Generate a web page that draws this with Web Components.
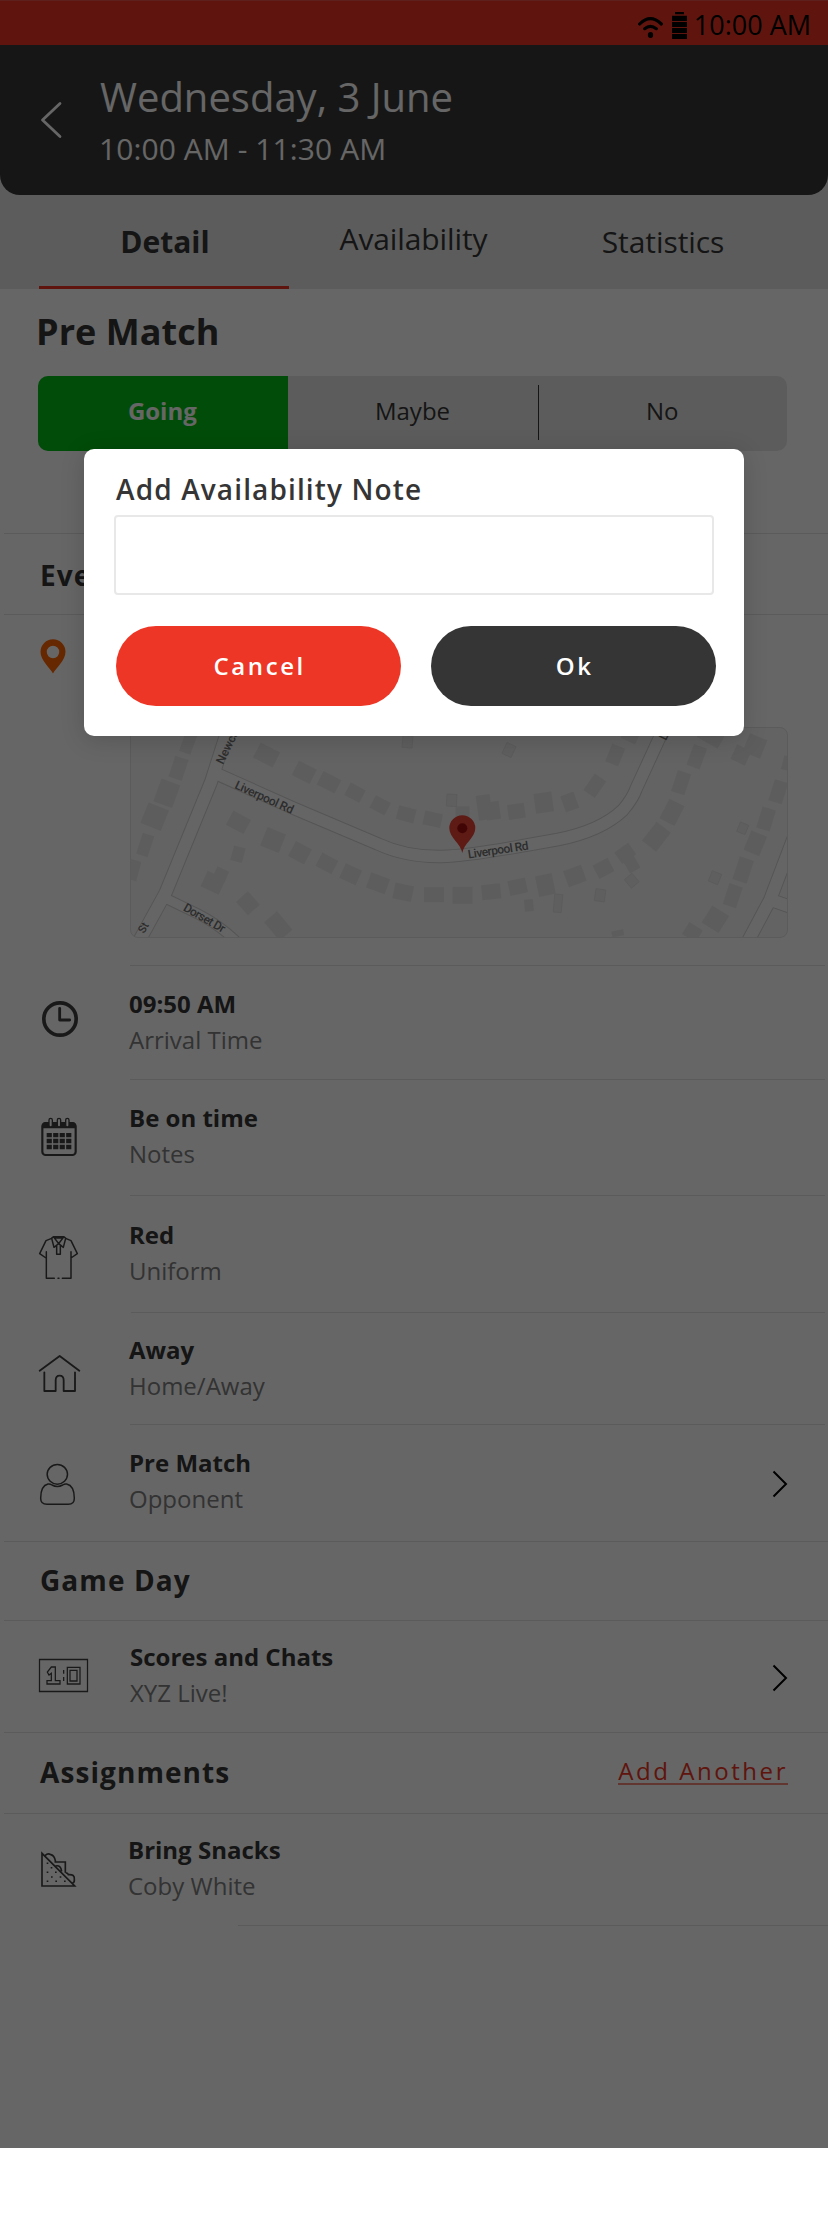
<!DOCTYPE html>
<html lang="en">
<head>
<meta charset="utf-8">
<title>Match detail</title>
<style>
  html, body { margin: 0; background: #fff; }
  body { font-family: "Open Sans", sans-serif; color: #353535; }
</style>
</head>
<body>
<match-screen></match-screen>

<script>
const define = (name, html, setup) => customElements.define(name, class extends HTMLElement {
  connectedCallback() {
    if (this.shadowRoot) return;
    const root = this.attachShadow({ mode: 'open' });
    const tpl = document.createElement('template');
    tpl.innerHTML = html;
    root.append(tpl.content.cloneNode(true));
    if (setup) setup(root, this);
  }
});

define('status-bar', `
<style>
  :host { display: flex; height: 45px; box-sizing: border-box; justify-content: flex-end; align-items: flex-start;
    padding: 6px 17px 0 0; background: #ed3625; color: #000; box-shadow: inset 0 1px #e8504a; }
  svg { margin: 6px 7px 0 0; }
  span { font-size: 27px; line-height: 37px; white-space: nowrap; }
</style>
<svg width="49" height="27" viewBox="54 36 147 81">
  <g fill="none" stroke="#000" stroke-width="9.500" stroke-linecap="round">
    <path d="M59 72Q91 40 124 72"/><path d="M74 86Q91 72 109 86"/>
  </g>
  <ellipse cx="91.500" cy="105" rx="8" ry="9"/>
  <path d="M165 36h27v6.500h-27zM156 47.500h45V63h-45zM156 66h45v15h-45zM156 84h45v15h-45zM156 102h45v15h-45z"/>
</svg>
<span>10:00 AM</span>`);

define('event-header', `
<style>
  :host { display: block; background: #e6e6e6; }
  header { display: flex; height: 150px; box-sizing: border-box; background: #373737; color: #fff; border-radius: 0 0 20px 20px; }
  svg { margin: 56px 38px 0 40px; flex: none; }
  .t { padding-top: 25px; white-space: nowrap; }
  .a { font-size: 40px; line-height: 54px; }
  .b { font-size: 30px; line-height: 40px; margin: 5px 0 0 -1px; letter-spacing: .08px; }
</style>
<header>
  <svg width="22" height="38" viewBox="0 0 22 38" fill="none" stroke="#fff" stroke-width="2.800" stroke-linecap="round" stroke-linejoin="round"><path d="M20 2.500L2.500 19 20 35.500"/></svg>
  <div class="t"><div class="a"><slot name="date"></slot></div><div class="b"><slot name="time"></slot></div></div>
</header>`);

define('tab-bar', `
<style>
  :host { display: grid; grid-template-columns: 250px 248px 250px; padding-left: 39px; height: 94px; box-sizing: border-box; background: #e6e6e6; }
  ::slotted(*) { text-align: center; font-size: 30px; line-height: 40px; padding: 27px 0 0 1px; box-sizing: border-box; }
  ::slotted(.on) { font-weight: 700; border-bottom: 3px solid #ed3625; padding-left: 2px; }
  ::slotted(.raised) { padding-top: 24px; letter-spacing: -.12px; }
  ::slotted(.last) { letter-spacing: -.08px; padding-left: 2px; }
</style><slot></slot>`);

define('answer-switch', `
<style>
  :host { display: grid; grid-template-columns: repeat(3, 1fr); width: 749px; height: 75px; border-radius: 10px; overflow: hidden; background: #e6e6e6; }
  div { display: flex; align-items: center; justify-content: center; font-size: 24px; box-sizing: border-box; padding-bottom: 6px; }
  .yes { background: #00be14; color: #fff; font-weight: 700; padding-right: 1px; }
  .no { position: relative; }
  .no::before { content: ""; position: absolute; left: 1px; top: 9px; width: 1px; height: 55px; background: #353535; }
</style>
<div class="yes">Going</div><div>Maybe</div><div class="no">No</div>`);

define('section-head', `
<style>
  :host { display: flex; justify-content: space-between; align-items: flex-start; box-sizing: border-box;
    height: var(--h); padding: var(--pad) 40px 0 40px; position: relative; }
  :host::after { content: ""; position: absolute; left: 4px; right: 0; bottom: 0; height: 1px; background: #e3e3e3; }
  h2 { margin: 0; font-size: 28px; line-height: 38px; font-weight: 700; letter-spacing: 1.080px; white-space: nowrap; }
</style>
<h2><slot></slot></h2><slot name="action"></slot>`);

define('text-link', `
<style>
  :host { display: block; margin-top: 5px; color: #ed3625; font-size: 24px; line-height: 25px; font-weight: 500;
    letter-spacing: 2.550px; white-space: nowrap; border-bottom: 2px solid #f3877c; }
</style><slot></slot>`);

define('info-row', `
<style>
  :host { display: grid; grid-template-columns: var(--x, 129px) 1fr auto; box-sizing: border-box; height: var(--h); position: relative; align-items: start; overflow: hidden; }
  :host::after { content: ""; position: absolute; left: var(--line, 130px); right: var(--end, 3px); bottom: 0; height: 1px; background: #e3e3e3; }
  .text { padding-top: var(--pad); font-size: 24px; line-height: 36px; white-space: nowrap; }
  .title { font-weight: 700; }
  .sub { color: #808080; }
  .go { display: none; margin: var(--go, 45px) 40px 0 0; }
  :host([link]) .go { display: block; }
</style>
<slot name="icon"></slot>
<div class="text"><div class="title"><slot name="title"></slot></div><div class="sub"><slot name="sub"></slot></div></div>
<svg class="go" width="16" height="28" viewBox="0 0 16 28" fill="none" stroke="#000" stroke-width="2"><path d="M1.500 1.500L14 14 1.500 26.500"/></svg>`);

/* Each house: x, y on the sheet, width, height, angle. */
const houses = [
  [338,105,22,17,27],[425,157,20,16,27],[482,187,20,15,27],[542,218,17,14,28],[600,256,17,14,28],[660,283,18,14,15],[721,298,18,14,12],
  [840,262,14,25,-8],[860,272,14,18,-8],[914,274,17,15,-8],[977,248,18,20,-8],[1037,246,14,17,-20],[1095,197,14,20,35],[1142,105,14,19,22],[1178,44,16,14,25],[790,280,14,14,0],
  [273,307,20,16,28],[353,360,20,20,22],[415,398,18,17,28],[477,430,18,15,28],[532,463,18,16,25],[595,490,20,16,20],[653,517,19,16,12],
  [724,524,20,15,0],[790,526,20,17,0],[856,515,19,15,-6],[917,500,18,15,-12],[981,495,17,21,-12],[1049,468,19,17,-20],[1115,445,17,15,-28],
  [1165,400,17,14,-35],[1178,428,12,18,-30],[1237,350,18,24,38],[1273,277,17,22,27],[1294,188,14,22,18],[1330,110,14,22,20],[1362,50,24,14,30],
  [157,70,12,20,20],[135,145,14,22,18],[108,220,20,24,20],[80,290,22,22,22],[58,375,12,22,18],[30,450,12,20,15],
  [272,403,12,15,15],[215,488,20,17,25],[232,465,13,13,25],[295,550,16,18,-42],[365,618,17,24,-40],
  [943,556,9,12,-5],[1432,105,16,16,25],[1464,78,19,20,22],[1538,130,9,14,15],[1518,215,14,22,17],[1490,297,14,22,17],[1465,370,17,21,22],
  [1437,450,15,24,18],[1413,527,14,22,18],[1373,598,20,20,32],[1320,637,16,14,32],[1148,640,12,6,-10]
];
const sheds = [[663,65,10,12,5],[765,241,10,12,3],[897,90,10,12,25],[1010,550,8,18,5],[1107,526,10,12,8],[1180,482,11,10,50],[1372,473,10,11,22],[1436,325,9,10,22]];

define('street-map', `
<style>
  :host { display: block; width: 658px; height: 211px; box-sizing: border-box; border: 1px solid #e3e3e3; border-radius: 8px; overflow: hidden; background: #f7f7f7; }
  svg { display: block; }
  text { font: 500 12px Roboto, sans-serif; fill: #707070; }
</style>
<svg width="656" height="209" viewBox="1 1 656 209">
  <g id="b"></g>
  <g fill="none" stroke-linejoin="round">
    <g stroke="#d4d4d4">
      <path stroke-width="13.500" d="M89 48L163 81 248 117Q276 130 311 129.500 337 129 397 118L428 112.500Q471 104 493 83 503 71 506 62L541-14"/>
      <path stroke-width="14" d="M105-20L81 55 35.500 166 8 216"/>
      <path stroke-width="11" d="M35 171L68 187Q88 197 106 214"/>
      <path stroke-width="14" d="M616 218L640 173 664 110M641 173L664 181"/>
    </g>
    <g stroke="#fdfdfd">
      <path stroke-width="11.500" d="M85 46L163 81 248 117Q276 130 311 129.500 337 129 397 118L428 112.500Q471 104 493 83 503 71 506 62L541-14"/>
      <path stroke-width="12" d="M105-20L81 55 35.500 166 8 216"/>
      <path stroke-width="9" d="M31 169L68 187Q88 197 106 214"/>
      <path stroke-width="12" d="M616 218L640 173 664 110M641 173L664 181"/>
    </g>
  </g>
  <text transform="translate(104 61) rotate(24.500)" textLength="63">Liverpool Rd</text>
  <text transform="translate(338.500 131.500) rotate(-8.500)" textLength="61">Liverpool Rd</text>
  <text transform="translate(52.500 183) rotate(30)" textLength="46">Dorset Dr</text>
  <text transform="translate(93 38) rotate(-64)">Newca</text>
  <text transform="translate(14 207) rotate(-60)" style="font-size:11px">St</text>
  <text transform="translate(536 14) rotate(-65)">L</text>
  <path fill="#ea4335" d="M332.300 126C331 117 319.300 110.500 319.300 101.300a13 13 0 0 1 26 0C345.300 110.500 333.600 117 332.300 126z"/>
  <circle cx="332.300" cy="101.300" r="5" fill="#a50e0e"/>
</svg>`, root => {
  const box = (list, style) => list.map(([x, y, w, h, a]) =>
    `<rect x="${-w / 2}" y="${-h / 2}" width="${w}" height="${h}" transform="translate(${(x / 2.306 - 10).toFixed(1)} ${(y / 3 - 7).toFixed(1)}) rotate(${a})" ${style}/>`).join('');
  root.getElementById('b').innerHTML = box(houses, 'fill="#e9e9e9"') + box(sheds, 'fill="#eeeef0" stroke="#e2e2e6" stroke-width=".8"');
});

define('place-row', `
<style>
  :host { display: grid; grid-template-columns: 130px 1fr; height: 351px; box-sizing: border-box; align-items: start; position: relative; }
  :host::after { content: ""; position: absolute; left: 130px; right: 3px; bottom: 0; height: 1px; background: #e3e3e3; }
  .pin { margin: 24px 0 0 40px; }
  street-map { margin-top: 112px; }
</style>
<svg class="pin" width="26" height="35" viewBox="0 0 26 35"><path fill="#ff6400" fill-rule="evenodd" d="M13 34.500C10 29 .5 21.500.5 12.800a12.500 12.500 0 0 1 25 0C25.500 21.500 16 29 13 34.500zM13 6.800a6.200 6.200 0 1 0 0 12.400 6.200 6.200 0 0 0 0-12.400z"/></svg>
<street-map></street-map>`);

define('pill-button', `
<style>
  :host { display: flex; align-items: center; justify-content: center; width: 285px; height: 80px; box-sizing: border-box; padding-left: 2.400px; padding-bottom: 1px;
    border-radius: 40px; background: var(--fill); color: #fff; font-size: 24px; font-weight: 600; letter-spacing: 2.600px; }
</style><slot></slot>`);

define('note-dialog', `
<style>
  :host { display: block; width: 660px; height: 287px; box-sizing: border-box; padding: 21px 28px 0 30px; background: #fff; border-radius: 10px; box-shadow: 0 4px 24px rgba(0,0,0,.16); }
  .t { font-size: 28px; line-height: 38px; font-weight: 600; letter-spacing: 1.120px; padding-left: 2px; }
  .field { margin-top: 7px; width: 600px; height: 80px; box-sizing: border-box; border: 2px solid #e8e8e8; border-radius: 4px; }
  .row { display: flex; gap: 30px; margin: 31px 0 0 2px; }
</style>
<div class="t"><slot></slot></div>
<div class="field"></div>
<div class="row"><pill-button style="--fill:#ed3625">Cancel</pill-button><pill-button style="--fill:#353535">Ok</pill-button></div>`);

define('match-screen', `
<style>
  :host { display: block; position: relative; width: 828px; height: 2148px; background: #fff; overflow: hidden; }
  .top { height: 245px; box-sizing: border-box; padding: 19px 0 0 38px; position: relative; }
  .top::after { content: ""; position: absolute; left: 4px; right: 0; bottom: 0; height: 1px; background: #e3e3e3; }
  h1 { margin: 0 0 20px -2px; font-size: 36px; line-height: 48px; font-weight: 700; letter-spacing: .05px; }
  .shade { position: absolute; inset: 0; background: rgba(0,0,0,.6); }
  note-dialog { position: absolute; left: 84px; top: 449px; }
  .i { display: block; fill: none; stroke: #404040; }
</style>
<status-bar></status-bar>
<event-header><span slot="date">Wednesday, 3 June</span><span slot="time">10:00 AM - 11:30 AM</span></event-header>
<tab-bar><div class="on">Detail</div><div class="raised">Availability</div><div class="last">Statistics</div></tab-bar>
<div class="top"><h1>Pre Match</h1><answer-switch></answer-switch></div>
<section-head style="--h:81px;--pad:22px">Event</section-head>
<place-row></place-row>

<info-row style="--h:114px;--pad:20px">
  <svg slot="icon" class="i" width="129" height="113" viewBox="0 18 387 339"><circle cx="180" cy="177" r="48.500" stroke-width="11"/><path d="M179 145v35h30" stroke-width="8.500" stroke-linecap="round" stroke-linejoin="round"/></svg>
  <span slot="title">09:50 AM</span><span slot="sub">Arrival Time</span>
</info-row>

<info-row style="--h:116px;--pad:20px">
  <svg slot="icon" class="i" width="129" height="115" viewBox="0 360 387 345">
    <rect x="127" y="489" width="100" height="96" rx="10" stroke-width="6.500"/>
    <path d="M127 505V496q0-9 9-9h82q9 0 9 9v9z" fill="#404040" stroke="none"/>
    <g fill="#fff" stroke-width="4"><rect x="147" y="475" width="10" height="26" rx="5"/><rect x="172" y="475" width="10" height="26" rx="5"/><rect x="197" y="475" width="10" height="26" rx="5"/></g>
    <path d="M140 525.500h74M140 543h74M140 561h74" stroke-width="13" stroke-dasharray="15.500 4"/>
  </svg>
  <span slot="title">Be on time</span><span slot="sub">Notes</span>
</info-row>

<info-row style="--h:117px;--pad:21px;--line:131px">
  <svg slot="icon" class="i" width="129" height="116" viewBox="0 -12 387 348" stroke-width="4.500" stroke-linejoin="round" stroke-linecap="round">
    <path d="M155 115l-17 7-19 39 19 13M197 115l16 7 19 39-19 13M139 155v80h24M213 155v80h-26M174 235h3"/>
    <path d="M155 115l7 27 14-11 14 11 7-27-5-5h-32zM161 111l15 20 15-20M166 114h20M170 136v27h11v-27"/>
  </svg>
  <span slot="title">Red</span><span slot="sub">Uniform</span>
</info-row>

<info-row style="--h:112px;--pad:19px;--line:130px">
  <svg slot="icon" class="i" width="129" height="111" viewBox="0 339 387 333" stroke-width="5.500" stroke-linejoin="round" stroke-linecap="round">
    <path d="M119 512l60-44 59 44M133 517v56h34v-32q0-14 12-14t12 14v32h34v-56"/>
  </svg>
  <span slot="title">Away</span><span slot="sub">Home/Away</span>
</info-row>

<info-row link style="--h:117px;--pad:20px;--line:4px;--end:0px;--go:45px">
  <svg slot="icon" class="i" width="129" height="116" viewBox="0 675 387 348" stroke-width="4.500">
    <ellipse cx="172" cy="823" rx="30.500" ry="29.500"/>
    <path d="M144 852q6-1 12 3 16 9 32 0 6-4 12-3 23 5 23 43 0 18-18 18h-64q-19 0-19-18 0-38 22-43z"/>
  </svg>
  <span slot="title">Pre Match</span><span slot="sub">Opponent</span>
</info-row>

<section-head style="--h:79px;--pad:19px">Game Day</section-head>

<info-row link style="--h:112px;--pad:18px;--line:4px;--end:0px;--x:130px;--go:43px">
  <svg slot="icon" class="i" width="130" height="111" viewBox="-60 -57 390 333" stroke-width="3.800">
    <path d="M58.500 58.500h144v96h-144z"/>
    <path d="M94 81h12v41h14v10H81v-10h13V100l-7 5-5-9zM142 82h38v50h-38zM150 91h21v32h-21zM131 90v11M131 111v12"/>
  </svg>
  <span slot="title">Scores and Chats</span><span slot="sub">XYZ Live!</span>
</info-row>

<section-head style="--h:81px;--pad:20px">Assignments<text-link slot="action">Add Another</text-link></section-head>

<info-row style="--h:112px;--pad:18px;--line:238px;--end:0px;--x:128px">
  <svg slot="icon" class="i" width="128" height="111" viewBox="-60 -48 384 333" stroke-width="5">
    <path d="M66 70v98h98zM76 76q7-7 17-2 10 3 13 18v6M104 96h32v32M107 108q15-4 18 16M137 130q5-3 8 4 20-2 18 14 1 9-5 11"/>
    <path stroke-width="4.500" d="M80 100h5M80 127h5M92 113h5M93 141h5M80 154h5M105 127h5M106 154h5M119 141h5M132 154h5"/>
  </svg>
  <span slot="title">Bring Snacks</span><span slot="sub">Coby White</span>
</info-row>

<div class="shade"></div>
<note-dialog>Add Availability Note</note-dialog>`);
</script>
</body>
</html>
